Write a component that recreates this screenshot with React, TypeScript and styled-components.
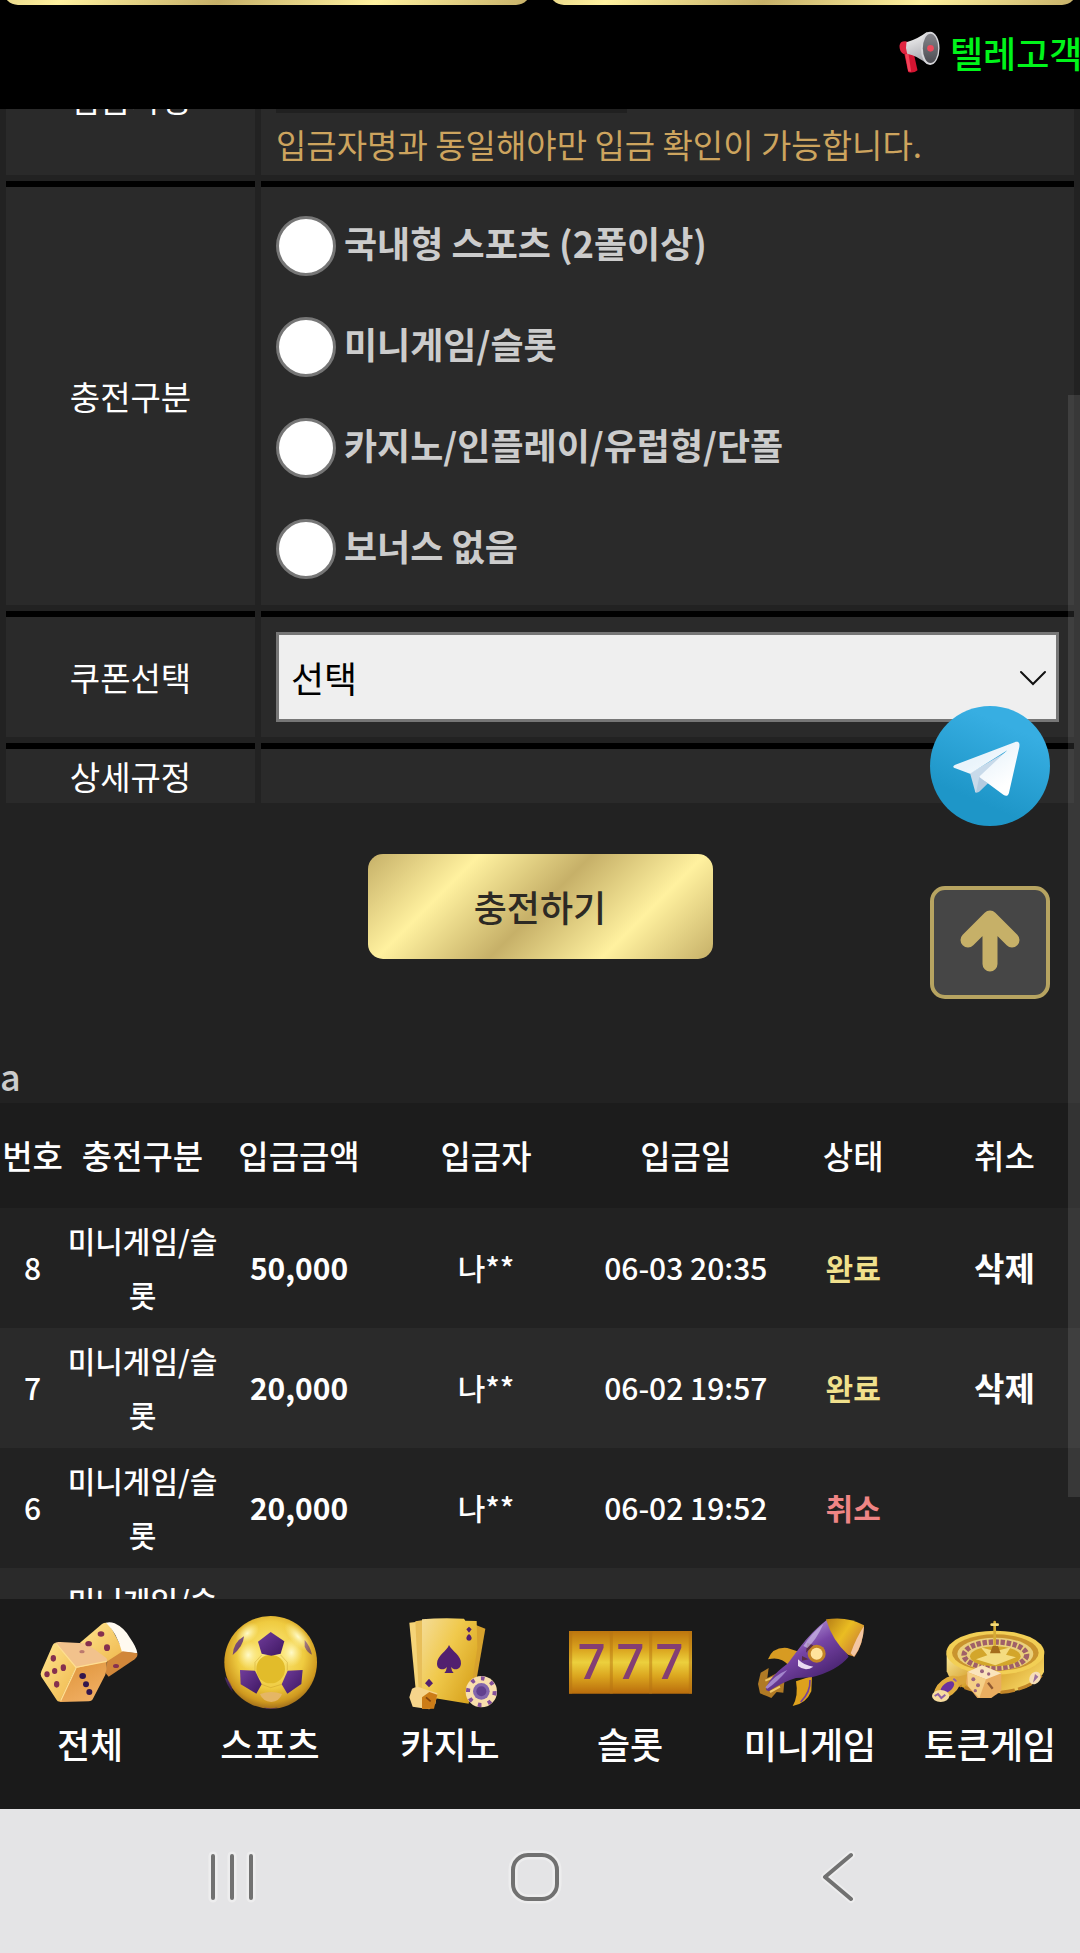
import React from "react"
import styled, { createGlobalStyle } from "styled-components"

const GlobalStyle = createGlobalStyle`
  * {
    box-sizing: border-box;
  }

  body {
    margin: 0;
    background: #222;
    color: #ccc;
    font-family: "Noto Sans CJK KR", "Noto Sans", sans-serif;
    font-size: 36px;
    line-height: 54px;
  }

  button,
  input,
  select {
    font: inherit;
  }
`

const Page = styled.div`
  min-height: 100vh;
  overflow: hidden;
`

const GoldButton = styled.button`
  height: 105px;
  padding: 0 0 2px;
  border: 0;
  border-radius: 15px;
  background: linear-gradient(
    135deg,
    #c6b068 0%,
    #fff19f 25%,
    #c6b068 50%,
    #fff19f 75%,
    #c6b068 100%
  );
  color: #2d2a24;
  font-weight: 500;
  cursor: pointer;
`

const Header = styled.header`
  position: fixed;
  top: 0;
  left: 0;
  right: 0;
  z-index: 10;
  height: 109px;
  background: #000;
  overflow: hidden;
`

const HeaderButtons = styled.div`
  display: flex;
  align-items: flex-end;
  gap: 18px;
  height: 5px;
  padding: 0 3px;

  ${GoldButton} {
    flex: 1;
  }
`

const Notice = styled.div`
  display: flex;
  align-items: center;
  gap: 9px;
  width: 182px;
  height: 94px;
  margin-left: auto;
  color: #00f51a;
  font-weight: 500;
  white-space: nowrap;

  svg {
    flex: none;
  }
`

const Main = styled.main`
  padding-top: 8px;
`

const FormTable = styled.table`
  width: 100%;
  table-layout: fixed;
  border-collapse: separate;
  border-spacing: 6px;
  font-size: 33px;
`

const FormHead = styled.th`
  width: 249px;
  padding: 0;
  border-top: 6px solid #000;
  background: #2a2a2a;
  color: #fff;
  font-weight: 400;
`

const FormCell = styled.td<{ $pad?: string }>`
  padding: ${p => p.$pad || "15px"};
  border-top: 6px solid #000;
  background: #2a2a2a;
`

const NameInput = styled.input`
  display: block;
  width: 351px;
  height: 90px;
  margin-bottom: 4px;
  padding: 0 15px;
  border: 0;
  background: #202020;
  color: #fff;
`

const Hint = styled.p`
  margin: 0;
  color: #cda45e;
`

const RadioList = styled.div`
  display: flex;
  flex-direction: column;
  gap: 41px;
`

const RadioLabel = styled.label`
  display: flex;
  align-items: flex-start;
  gap: 8px;
  font-size: 36px;
  font-weight: 700;
  line-height: 52px;
`

const Radio = styled.input`
  appearance: none;
  flex: none;
  width: 60px;
  height: 60px;
  margin: 0;
  border: 3px solid #767676;
  border-radius: 50%;
  background: #fff;

  &:checked {
    box-shadow: inset 0 0 0 12px #fff;
    background: #767676;
  }
`

const SelectBox = styled.div`
  display: grid;
  align-items: center;

  > * {
    grid-area: 1 / 1;
  }

  svg {
    justify-self: end;
    margin-right: 11px;
    pointer-events: none;
  }
`

const Select = styled.select`
  appearance: none;
  width: 100%;
  height: 90px;
  padding: 0 12px;
  border: 3px solid #767676;
  border-radius: 0;
  background: #efefef;
  color: #000;
  font-size: 36px;
`

const SubmitRow = styled.div`
  display: flex;
  justify-content: center;
  padding: 45px 0 89px;

  ${GoldButton} {
    width: 345px;
  }
`

const ListTitle = styled.div`
  height: 55px;
  font-weight: 500;
`

const HistoryTable = styled.table`
  width: 100%;
  table-layout: fixed;
  border-collapse: collapse;
  color: #fff;
  font-size: 30px;
  text-align: center;

  th,
  td {
    padding: 0 0 2px;
  }

  thead tr {
    height: 105px;
    background: #1c1c1c;
    font-size: 33px;
  }

  th {
    font-weight: 500;
  }

  tbody tr {
    height: 120px;
  }

  tbody tr:nth-child(even) {
    background: #2a2a2a;
  }
`

const Col = styled.col<{ $width?: string }>`
  width: ${p => p.$width || "auto"};
`

const Cell = styled.td`
  font-weight: 500;
`

const Amount = styled.td`
  font-weight: 700;
`

const Status = styled.td<{ $canceled: boolean }>`
  color: ${p => (p.$canceled ? "#ef8585" : "#f0e08c")};
  font-weight: 700;
`

const DeleteButton = styled.button`
  padding: 0;
  border: 0;
  background: none;
  color: #fff;
  font-size: 33px;
  font-weight: 700;
  cursor: pointer;
`

const FloatingTools = styled.div`
  position: fixed;
  top: 706px;
  right: 30px;
  z-index: 5;
  display: flex;
  flex-direction: column;
  gap: 60px;

  svg {
    display: block;
  }
`

const TopButton = styled.button`
  display: grid;
  place-items: center;
  width: 120px;
  height: 113px;
  padding: 0 0 4px;
  border: 4px solid #b7a461;
  border-radius: 15px;
  background: #464646;
  cursor: pointer;
`

const ScrollThumb = styled.div`
  position: fixed;
  top: 395px;
  right: 0;
  z-index: 6;
  width: 12px;
  height: 1102px;
  background: rgba(255, 255, 255, 0.1);
`

const Footer = styled.footer`
  position: fixed;
  bottom: 0;
  left: 0;
  right: 0;
  z-index: 10;
`

const GameNav = styled.nav`
  display: grid;
  grid-template-columns: repeat(6, 1fr);
  height: 210px;
  padding-top: 17px;
  background: #1a1a1a;
`

const GameLink = styled.a`
  display: flex;
  flex-direction: column;
  align-items: center;
  gap: 6px;
  color: #fff;
  font-weight: 500;
  text-decoration: none;
  white-space: nowrap;
`

const SystemBar = styled.div`
  display: grid;
  grid-template-columns: repeat(3, 1fr);
  align-items: center;
  height: 144px;
  padding: 0 91px 8px 81px;
  background: #e4e4e6;
`

const SystemButton = styled.button`
  display: grid;
  justify-self: center;
  padding: 0;
  border: 0;
  background: none;
  cursor: pointer;
`

const Megaphone = () => (
  <svg width="43" height="42" viewBox="0 0 126 126" aria-hidden="true">
    <defs>
      <linearGradient id="horn" x1="0" y1="0" x2="0.3" y2="1">
        <stop offset="0" stopColor="#fafafa" />
        <stop offset="1" stopColor="#a8a8ae" />
      </linearGradient>
      <linearGradient id="bell" x1="0" y1="0" x2="0" y2="1">
        <stop offset="0" stopColor="#85858b" />
        <stop offset="1" stopColor="#4c4c52" />
      </linearGradient>
    </defs>
    <path d="M17 66l28-2 12 54q-12 10-28 5z" fill="#d41431" />
    <path d="M20 70l10-2 8 54-9-2z" fill="#f4435a" />
    <path d="M3 44q2-14 18-13l14 4v30l-20 4Q2 60 3 44z" fill="#e02440" />
    <path d="M24 34Q58 24 84 4q16-3 20 50-4 44-18 46Q58 74 26 68q-6-16-2-34z" fill="url(#horn)" />
    <ellipse cx="95" cy="52" rx="28" ry="50" fill="#d6d6da" />
    <ellipse cx="96" cy="52" rx="23" ry="44" fill="url(#bell)" />
    <circle cx="96" cy="52" r="10" fill="#ee4a5c" />
  </svg>
)

const Chevron = () => (
  <svg width="31" height="17" viewBox="0 0 31 17" fill="none" stroke="#111" strokeWidth="2" strokeLinecap="round" aria-hidden="true">
    <path d="M4 3l12 12 12-12" />
  </svg>
)

const Telegram = () => (
  <svg width="120" height="120" viewBox="0 0 360 360" aria-hidden="true">
    <defs>
      <linearGradient id="tgSky" x1="0.67" y1="0.17" x2="0.4" y2="0.8">
        <stop offset="0" stopColor="#37aee2" />
        <stop offset="1" stopColor="#1e96c8" />
      </linearGradient>
      <linearGradient id="tgPlane" x1="0.4" y1="0.3" x2="0.8" y2="0.8">
        <stop offset="0" stopColor="#eaf4fb" />
        <stop offset="1" stopColor="#fff" />
      </linearGradient>
    </defs>
    <circle cx="180" cy="180" r="180" fill="url(#tgSky)" />
    <path d="M138 260c-4-2-2-3-4-9l-14-50 130-75z" fill="#c8daea" />
    <path d="M138 260c5 0 9-2 12-5l24-23-26-20z" fill="#b4cbe0" />
    <path
      d="M149 214l71 52c8 6 15 4 17-6l31-137c3-14-5-18-14-14L76 176c-8 4-8 8 0 11l44 16 112-70-83 78z"
      fill="url(#tgPlane)"
    />
  </svg>
)

const ArrowUp = () => (
  <svg width="66" height="66" viewBox="0 0 66 66" fill="none" stroke="#c6b068" strokeWidth="15" strokeLinecap="round" strokeLinejoin="round" aria-hidden="true">
    <path d="M33 56V14M11 32l22-22 22 22" />
    <path d="M33 14v10" />
  </svg>
)

const ODD = "84 78 372 282"
const EVEN = "624 78 372 282"

type IconBoxProps = {
  viewBox: string
  children: React.ReactNode
}

const IconBox: React.FC<IconBoxProps> = ({ viewBox, children }) => (
  <svg width="124" height="94" viewBox={viewBox} aria-hidden="true">
    {children}
  </svg>
)

const DiceIcon = () => (
  <IconBox viewBox={ODD}>
    <defs>
      <linearGradient id="diceSide" x1="0" y1="0" x2="0.6" y2="1">
        <stop offset="0" stopColor="#dd9237" />
        <stop offset="1" stopColor="#f0ae62" />
      </linearGradient>
      <linearGradient id="diceFace" x1="0" y1="0" x2="1" y2="1">
        <stop offset="0" stopColor="#ffe58e" />
        <stop offset="1" stopColor="#efb74d" />
      </linearGradient>
    </defs>
    <path d="M240 158l66-56q12-8 22 0l44 84-48 30z" fill="url(#diceFace)" />
    <path d="M318 98q12-4 26 2 30 14 46 44 20 28 22 46l-46-4q-14-56-48-88z" fill="#fffaf0" />
    <path d="M322 214l46-30 44 6q2 10-8 18l-78 52-10-12z" fill="#d1873a" />
    <path d="M166 158q6-3 14-2l72 4q10 2 18 8l46 34q8 6 4 14l-92 20z" fill="#f2c28c" />
    <path d="M166 158l62 74-48 102q-6 2-10-4l-46-70q-4-8 0-16l34-78q2-6 8-8z" fill="url(#diceFace)" />
    <path d="M228 234l92-20q2 20-4 40l-36 70q-4 10-14 10l-84 2q-6 0-2-6z" fill="url(#diceSide)" />
    <path d="M168 160l60 72 92-18M228 234l-46 98" fill="none" stroke="#ffdf90" strokeWidth="4" />
    <g fill="#85304f">
      <ellipse cx="160" cy="205" rx="8" ry="10" />
      <ellipse cx="190" cy="233" rx="8" ry="10" />
      <ellipse cx="164" cy="243" rx="8" ry="9" />
      <ellipse cx="141" cy="253" rx="8" ry="9" />
      <ellipse cx="170" cy="283" rx="8" ry="10" />
      <ellipse cx="303" cy="132" rx="10" ry="8" />
      <ellipse cx="266" cy="161" rx="10" ry="8" />
      <ellipse cx="321" cy="173" rx="9" ry="10" />
      <ellipse cx="246" cy="185" rx="8" ry="5" opacity=".5" />
      <ellipse cx="348" cy="228" rx="9" ry="6" />
    </g>
    <g fill="#33164d">
      <ellipse cx="248" cy="258" rx="10" ry="9" />
      <ellipse cx="258" cy="283" rx="9" ry="9" />
      <ellipse cx="268" cy="306" rx="9" ry="9" />
    </g>
  </IconBox>
)

const BallIcon = () => (
  <IconBox viewBox={EVEN}>
    <defs>
      <radialGradient id="ball" cx="0.5" cy="0.42" r="0.6">
        <stop offset="0" stopColor="#ffef88" />
        <stop offset="0.6" stopColor="#efcb40" />
        <stop offset="0.85" stopColor="#cf991f" />
        <stop offset="1" stopColor="#96641a" />
      </radialGradient>
      <radialGradient id="shine">
        <stop offset="0" stopColor="#fffac8" />
        <stop offset="1" stopColor="#fff3a0" stopOpacity="0" />
      </radialGradient>
      <linearGradient id="ballPatch" x1="0" y1="0" x2="1" y2="1">
        <stop offset="0" stopColor="#713d9b" />
        <stop offset="1" stopColor="#3e1762" />
      </linearGradient>
    </defs>
    <circle cx="812" cy="217" r="139" fill="url(#ball)" />
    <ellipse cx="745" cy="195" rx="34" ry="42" fill="url(#shine)" />
    <ellipse cx="874" cy="188" rx="34" ry="42" fill="url(#shine)" />
    <ellipse cx="742" cy="130" rx="40" ry="26" fill="url(#shine)" transform="rotate(-40 742 130)" />
    <ellipse cx="894" cy="140" rx="54" ry="24" fill="url(#shine)" transform="rotate(48 894 140)" />
    <g fill="none" stroke="#b88b22" strokeWidth="2" opacity=".5">
      <path d="M785 195l-20 22v24M842 195l20 22v24M785 283l27 10 33-10" />
    </g>
    <circle cx="812" cy="237" r="43" fill="#e2bc2a" />
    <g fill="url(#ballPatch)">
      <path d="M812 126l41 28-11 37-28 6-29-6-11-36z" />
      <path d="M720 240l45 2 20 41-16 28-47-28z" />
      <path d="M863 242l45-2-4 42-42 29-17-28z" />
      <path d="M698 195q2-38 34-56-2 30-34 56z" opacity=".8" />
      <path d="M914 150q16 18 22 44-14-6-22-24z" opacity=".6" />
      <path d="M674 260q6 26 24 46-2-30-24-46z" opacity=".6" />
      <path d="M790 351q22 8 44 0l-10 5h-24z" opacity=".7" />
    </g>
    <path d="M780 312q34-12 66 0-8 22-32 24-26-2-34-24z" fill="#e5b665" />
  </IconBox>
)

const CardsIcon = () => (
  <IconBox viewBox={ODD}>
    <defs>
      <linearGradient id="card" x1="0" y1="0" x2="1" y2="0.7">
        <stop offset="0" stopColor="#f4dc97" />
        <stop offset="0.5" stopColor="#f0c94c" />
        <stop offset="1" stopColor="#d9a520" />
      </linearGradient>
    </defs>
    <path d="M340 102l36 14-26 150-60 60z" fill="#d7a22d" />
    <path d="M148 98l50-6 30 220-60-4z" fill="#f5d478" />
    <path d="M166 94l40-6 34 230-64-12z" fill="#e8bf5a" />
    <path d="M186 88q60-6 126-2l4 6 34 1 2 80-26 168-100-16-40-20z" fill="url(#card)" />
    <g fill="#52206f">
      <path d="M267 165c8 18 38 32 36 56-2 18-20 22-30 10q2 12 8 18h-28q6-6 8-18c-10 12-30 8-30-10 0-24 30-38 36-56z" />
      <path d="M327 132q-12 10-6 18 6 5 12 0 6-8-6-18zM327 110l8 8-8 10-8-10zM207 266l12 14-12 12-12-12z" />
    </g>
    <path d="M156 296q16-10 34 0l42 14-6 32-18 16-50-8-10-28z" fill="#f6d48b" />
    <path d="M186 322l22-16 24 8-10 42-36 1z" fill="#cc7c17" />
    <path d="M198 322l14 12" stroke="#83430f" strokeWidth="5" />
    <circle cx="364" cy="305" r="47" fill="#f8dfad" />
    <circle cx="364" cy="305" r="40" fill="none" stroke="#84509a" strokeWidth="12" strokeDasharray="11 20" />
    <circle cx="364" cy="304" r="25" fill="#8366ac" />
    <circle cx="364" cy="304" r="15" fill="#61408e" />
  </IconBox>
)

const SlotIcon = () => (
  <IconBox viewBox={EVEN}>
    <defs>
      <linearGradient id="slot" x1="0" y1="0" x2="0" y2="1">
        <stop offset="0" stopColor="#bd750e" />
        <stop offset="0.3" stopColor="#dba61f" />
        <stop offset="0.5" stopColor="#ecd03d" />
        <stop offset="0.72" stopColor="#dba61f" />
        <stop offset="1" stopColor="#b96c0c" />
      </linearGradient>
    </defs>
    <path d="M627 123h369v188H627z" fill="url(#slot)" />
    <path d="M632 123v188M754 123v188M872 123v188M991 123v188" stroke="#b77413" strokeWidth="9" opacity=".5" />
    <g fill="#843e74" fontFamily="Open Sans, sans-serif" fontSize="146" fontWeight="600" textAnchor="middle">
      <text x="695" y="267">7</text>
      <text x="811" y="267">7</text>
      <text x="928" y="267">7</text>
    </g>
  </IconBox>
)

const RocketIcon = () => (
  <IconBox viewBox={ODD}>
    <defs>
      <linearGradient id="hull" x1="0.3" y1="0.2" x2="0.7" y2="0.8">
        <stop offset="0" stopColor="#a987cf" />
        <stop offset="0.4" stopColor="#7744a5" />
        <stop offset="1" stopColor="#4b2573" />
      </linearGradient>
      <linearGradient id="nose" x1="0" y1="0" x2="1" y2="0.7">
        <stop offset="0" stopColor="#b57d16" />
        <stop offset="0.5" stopColor="#eabd22" />
        <stop offset="1" stopColor="#c87b35" />
      </linearGradient>
    </defs>
    <path d="M144 208q14-38 58-34l30 10-26 42q-24-28-62-18z" fill="#d79b22" />
    <path d="M276 258l-2 46q-16 38-56 44 18-30 10-74z" fill="#dda11d" />
    <path d="M270 270q2 36-28 66" fill="none" stroke="#76419c" strokeWidth="5" />
    <path d="M146 234l-4 30 28-14 4 22 20-8-4 44-20-2-16 18-14-6-20-8-6-28 8-34z" fill="#b07a25" />
    <path d="M136 272l24-10M150 306l30-16" stroke="#f0c768" strokeWidth="6" />
    <path d="M138 300q4-34 66-80l34-46q38-50 82-84l66 110q-34 42-112 62l-46 2q-36 10-82 40z" fill="url(#hull)" />
    <path d="M318 88q66-10 114 18-2 58-28 94l-20-6q-46-40-66-106z" fill="url(#nose)" />
    <path d="M432 108q-2 56-30 92l-10-10q16-46 40-82z" fill="#f3c6a3" />
    <circle cx="290" cy="191" r="27" fill="#c38425" />
    <circle cx="290" cy="191" r="18" fill="#ffe39b" />
    <path d="M262 158l18 8-22 22zM246 198l20 10-20 4z" fill="#592c45" />
    <path d="M234 208q20 20 46 22-24 16-46-2z" fill="#eadbf2" />
    <path d="M250 168q26-40 60-66-20 46-48 72z" fill="#cbb9e5" opacity=".7" />
    <path d="M136 292q30-38 66-52-30 36-60 56z" fill="#a386cc" />
  </IconBox>
)

const RouletteIcon = () => (
  <IconBox viewBox={EVEN}>
    <defs>
      <linearGradient id="rim" x1="0" y1="0" x2="1" y2="0.5">
        <stop offset="0" stopColor="#fbeb9b" />
        <stop offset="0.5" stopColor="#d39b25" />
        <stop offset="1" stopColor="#f4d361" />
      </linearGradient>
    </defs>
    <path d="M680 190v54q20 64 150 66 112-6 142-64v-56z" fill="url(#rim)" />
    <path d="M690 262q40 46 140 46 96-6 134-52" fill="none" stroke="#c08428" strokeWidth="10" strokeDasharray="44 10" />
    <ellipse cx="826" cy="188" rx="147" ry="66" fill="#f2cf55" />
    <ellipse cx="826" cy="188" rx="130" ry="55" fill="#c9942e" />
    <ellipse cx="826" cy="192" rx="114" ry="49" fill="#ead07c" />
    <ellipse cx="826" cy="195" rx="94" ry="39" fill="none" stroke="#a06068" strokeWidth="16" strokeDasharray="13 5" />
    <ellipse cx="826" cy="199" rx="76" ry="30" fill="#d3a62b" />
    <path d="M826 184l46-12-14 22 30 8-62 24-58-18 34-12-20-24z" fill="#f4dc80" />
    <path d="M824 96v86" stroke="#d6ac36" strokeWidth="8" strokeLinecap="round" />
    <path d="M815 104h18" stroke="#f4da78" strokeWidth="8" strokeLinecap="round" />
    <path d="M818 168h16l8 22h-32z" fill="#a56d1c" />
    <ellipse cx="945" cy="264" rx="16" ry="20" fill="#f6dfb9" transform="rotate(35 945 264)" />
    <path d="M945 252l10 8-16 18z" fill="#9c719c" />
    <ellipse cx="682" cy="292" rx="46" ry="26" fill="#e1ad3e" transform="rotate(-38 682 292)" />
    <ellipse cx="682" cy="292" rx="24" ry="13" fill="#6b329e" transform="rotate(-38 682 292)" />
    <ellipse cx="662" cy="318" rx="26" ry="18" fill="#f7dc9f" />
    <path d="M644 318l10-6 10 12 12-10M700 266l10 8" fill="none" stroke="#9061a4" strokeWidth="6" />
    <path d="M706 262l40-10v22l-30 14z" fill="#dba63b" />
    <path d="M742 246l44-20 58 24v52l-30 22h-42l-34-42z" fill="#e9ad60" />
    <path d="M742 246l44-20 58 24-46 18z" fill="#fae4bc" />
    <path d="M742 246l56 22-20 56-34-36z" fill="#f5cf86" />
    <g fill="#9b657d">
      <circle cx="760" cy="268" r="6" />
      <circle cx="774" cy="286" r="6" />
      <circle cx="766" cy="302" r="5" />
      <circle cx="786" cy="244" r="6" />
      <circle cx="806" cy="252" r="5" />
    </g>
    <path d="M804 278l14 18" stroke="#8f5931" strokeWidth="7" />
  </IconBox>
)

const RecentIcon = () => (
  <svg width="48" height="54" viewBox="0 0 48 54" strokeLinecap="round" aria-hidden="true">
    <path d="M5 6v42M24 6v42M43 6v42" stroke="#ededee" strokeWidth="9" />
    <path d="M5 6v42M24 6v42M43 6v42" stroke="#717171" strokeWidth="4" />
  </svg>
)

const HomeIcon = () => (
  <svg width="54" height="54" viewBox="0 0 54 54" fill="none" aria-hidden="true">
    <rect x="5" y="5" width="44" height="44" rx="15" stroke="#ededee" strokeWidth="9" />
    <rect x="5" y="5" width="44" height="44" rx="15" stroke="#717171" strokeWidth="4" />
  </svg>
)

const BackIcon = () => (
  <svg width="40" height="54" viewBox="0 0 40 54" fill="none" strokeLinecap="round" strokeLinejoin="round" aria-hidden="true">
    <path d="M33 5L7 27l26 22" stroke="#ededee" strokeWidth="8" />
    <path d="M33 5L7 27l26 22" stroke="#717171" strokeWidth="4" />
  </svg>
)

const bonusTypes = [
  "국내형 스포츠 (2폴이상)",
  "미니게임/슬롯",
  "카지노/인플레이/유럽형/단폴",
  "보너스 없음",
]

type Deposit = {
  no: number
  amount: string
  date: string
  status: string
}

const deposits: Deposit[] = [
  { no: 8, amount: "50,000", date: "06-03 20:35", status: "완료" },
  { no: 7, amount: "20,000", date: "06-02 19:57", status: "완료" },
  { no: 6, amount: "20,000", date: "06-02 19:52", status: "취소" },
]

const games = [
  { name: "전체", Icon: DiceIcon },
  { name: "스포츠", Icon: BallIcon },
  { name: "카지노", Icon: CardsIcon },
  { name: "슬롯", Icon: SlotIcon },
  { name: "미니게임", Icon: RocketIcon },
  { name: "토큰게임", Icon: RouletteIcon },
]

const DepositForm = () => (
  <form onSubmit={e => e.preventDefault()}>
    <FormTable>
      <tbody>
        <tr>
          <FormHead scope="row">
            <label htmlFor="depositor">입금자명</label>
          </FormHead>
          <FormCell $pad="3px 15px 4px">
            <NameInput id="depositor" type="text" />
            <Hint>입금자명과 동일해야만 입금 확인이 가능합니다.</Hint>
          </FormCell>
        </tr>
        <tr>
          <FormHead scope="row" id="bonus-label">
            충전구분
          </FormHead>
          <FormCell $pad="29px 15px 26px">
            <RadioList role="radiogroup" aria-labelledby="bonus-label">
              {bonusTypes.map(type => (
                <RadioLabel key={type}>
                  <Radio type="radio" name="bonus" value={type} />
                  {type}
                </RadioLabel>
              ))}
            </RadioList>
          </FormCell>
        </tr>
        <tr>
          <FormHead scope="row">
            <label htmlFor="coupon">쿠폰선택</label>
          </FormHead>
          <FormCell>
            <SelectBox>
              <Select id="coupon">
                <option>선택</option>
              </Select>
              <Chevron />
            </SelectBox>
          </FormCell>
        </tr>
        <tr>
          <FormHead scope="row">상세규정</FormHead>
          <FormCell $pad="0" />
        </tr>
      </tbody>
    </FormTable>
    <SubmitRow>
      <GoldButton type="submit">충전하기</GoldButton>
    </SubmitRow>
  </form>
)

const DepositHistory = () => (
  <HistoryTable>
    <colgroup>
      <Col $width="65px" />
      <Col $width="155px" />
      <Col $width="158px" />
      <Col $width="20%" />
      <Col $width="17%" />
      <Col $width="14%" />
      <Col />
    </colgroup>
    <thead>
      <tr>
        <th>번호</th>
        <th>충전구분</th>
        <th>입금금액</th>
        <th>입금자</th>
        <th>입금일</th>
        <th>상태</th>
        <th>취소</th>
      </tr>
    </thead>
    <tbody>
      {deposits.map(({ no, amount, date, status }) => (
        <tr key={no}>
          <Cell>{no}</Cell>
          <Cell>미니게임/슬롯</Cell>
          <Amount>{amount}</Amount>
          <Cell>나**</Cell>
          <Cell>{date}</Cell>
          <Status $canceled={status === "취소"}>{status}</Status>
          <td>
            {status === "완료" && <DeleteButton type="button">삭제</DeleteButton>}
          </td>
        </tr>
      ))}
      <tr>
        <Cell />
        <Cell>미니게임/슬롯</Cell>
        <td colSpan={5} />
      </tr>
    </tbody>
  </HistoryTable>
)

const App: React.FC = () => (
  <Page>
    <GlobalStyle />
    <Header>
      <HeaderButtons>
        <GoldButton type="button" aria-label="충전" />
        <GoldButton type="button" aria-label="환전" />
      </HeaderButtons>
      <Notice>
        <Megaphone />
        텔레고객
      </Notice>
    </Header>

    <Main>
      <DepositForm />
      <ListTitle>a</ListTitle>
      <DepositHistory />
    </Main>

    <FloatingTools>
      <a href="#telegram" aria-label="텔레그램">
        <Telegram />
      </a>
      <TopButton type="button" aria-label="맨 위로">
        <ArrowUp />
      </TopButton>
    </FloatingTools>
    <ScrollThumb />

    <Footer>
      <GameNav>
        {games.map(({ name, Icon }) => (
          <GameLink key={name} href="#games">
            <Icon />
            {name}
          </GameLink>
        ))}
      </GameNav>
      <SystemBar>
        <SystemButton type="button" aria-label="최근 앱">
          <RecentIcon />
        </SystemButton>
        <SystemButton type="button" aria-label="홈">
          <HomeIcon />
        </SystemButton>
        <SystemButton type="button" aria-label="뒤로">
          <BackIcon />
        </SystemButton>
      </SystemBar>
    </Footer>
  </Page>
)

export default App
